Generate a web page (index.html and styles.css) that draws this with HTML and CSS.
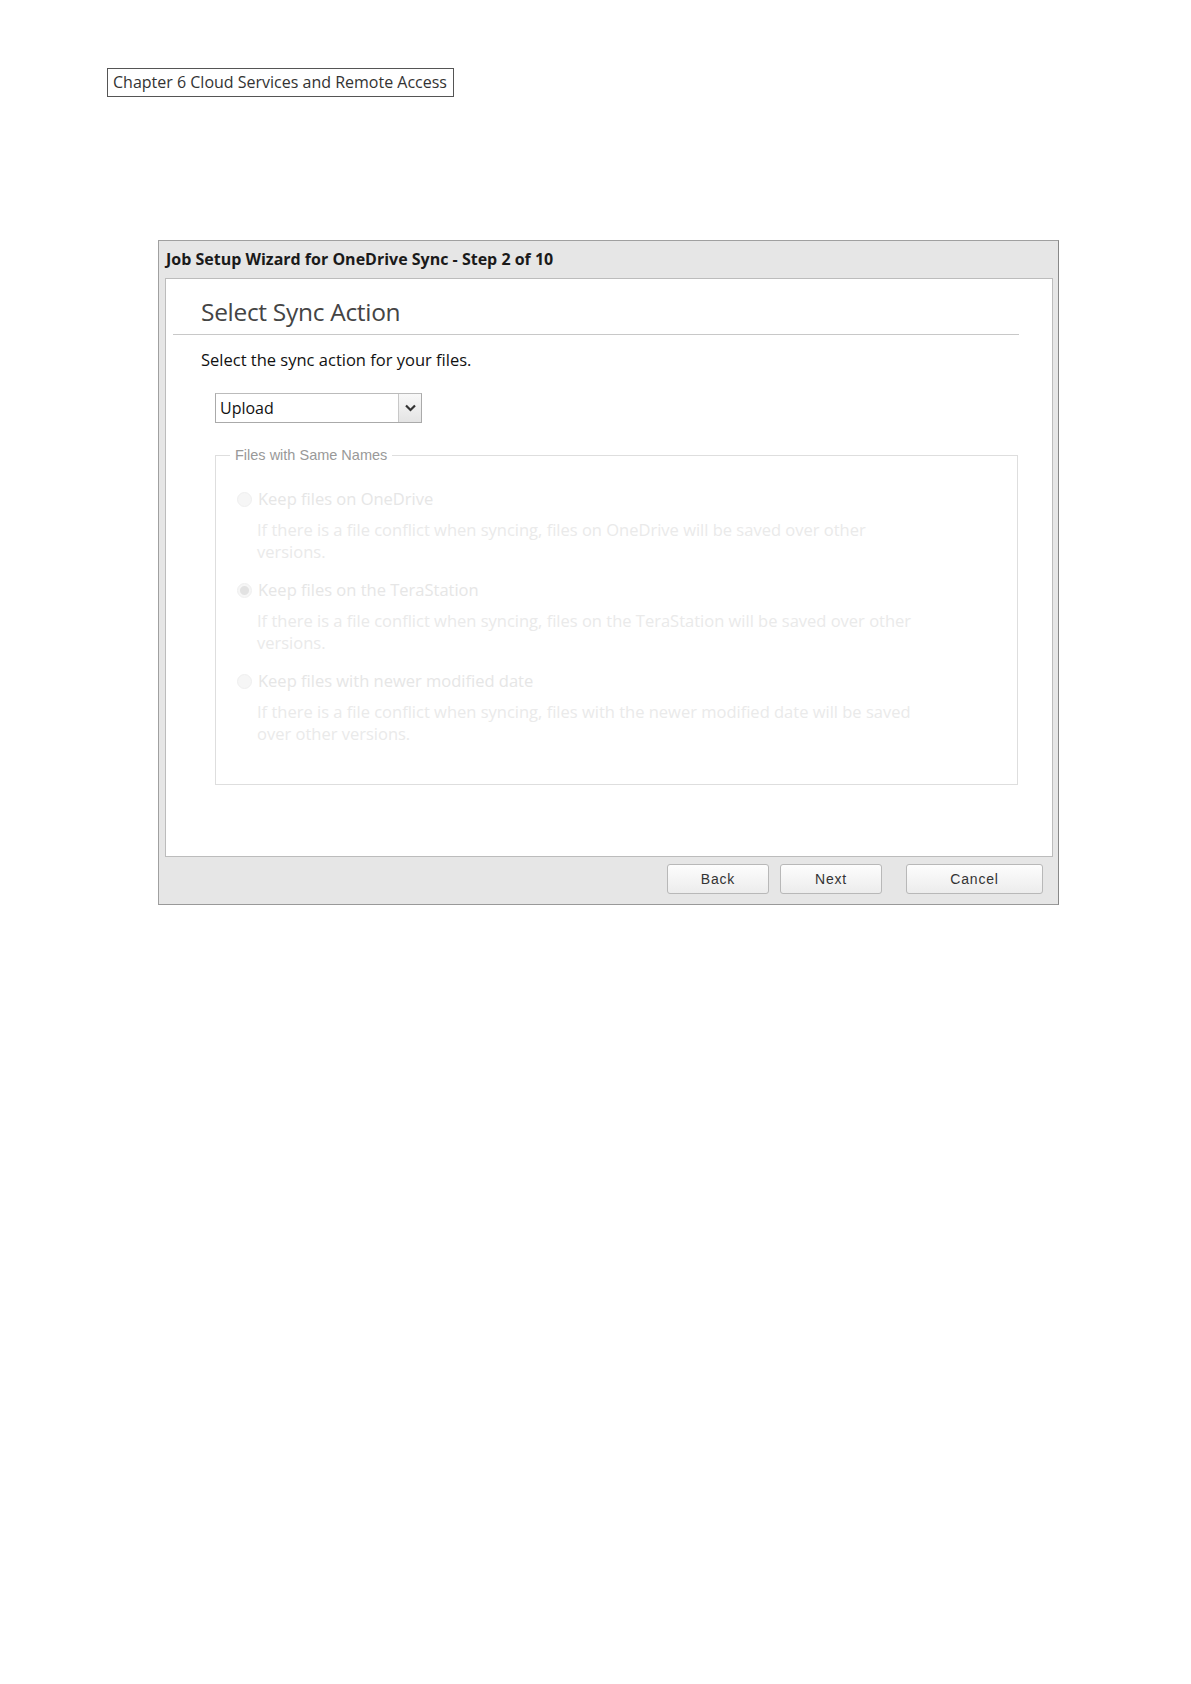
FILE: index.html
```html
<!DOCTYPE html>
<html>
	<head>
		<meta charset="UTF-8">
		<title>Job Setup Wizard for OneDrive Sync</title>
		<link rel="stylesheet" href="styles.css">
	</head>
	<body>
		<div class="page">
			<div class="chapter">Chapter 6 Cloud Services and Remote Access</div>

			<div class="wizard">
				<div class="wizard-title">Job Setup Wizard for OneDrive Sync - Step 2 of 10</div>
				<div class="wizard-body">
					<h2>Select Sync Action</h2>
					<p class="intro">Select the sync action for your files.</p>
					<div class="select">
						<span class="select-value">Upload</span>
						<span class="select-btn">
							<svg width="11" height="8" viewBox="0 0 11 8"><path d="M1 1.5 L5.5 6 L10 1.5" fill="none" stroke="#333" stroke-width="2.2"/></svg>
						</span>
					</div>
					<fieldset class="same-names">
						<legend>Files with Same Names</legend>
						<div class="option">
							<label><span class="radio"></span>Keep files on OneDrive</label>
							<p>If there is a file conflict when syncing, files on OneDrive will be saved over other versions.</p>
						</div>
						<div class="option">
							<label><span class="radio checked"></span>Keep files on the TeraStation</label>
							<p>If there is a file conflict when syncing, files on the TeraStation will be saved over other versions.</p>
						</div>
						<div class="option">
							<label><span class="radio"></span>Keep files with newer modified date</label>
							<p>If there is a file conflict when syncing, files with the newer modified date will be saved over other versions.</p>
						</div>
					</fieldset>
				</div>
				<div class="wizard-footer">
					<button class="btn">Back</button>
					<button class="btn">Next</button>
					<button class="btn btn-wide">Cancel</button>
				</div>
			</div>
		</div>
	</body>
</html>
```

FILE: styles.css
```css
*{
	margin: 0;
	padding: 0;
	box-sizing: border-box;
}
body{
	background: #fff;
	font-family: "Open Sans", "Liberation Sans", sans-serif;
	color: #000;
}
.page{
	padding: 68px 0 0 107px;
}
.chapter{
	display: inline-block;
	height: 29px;
	padding: 0 6px 0 5px;
	border: 1px solid #555;
	font-family: "Open Sans", sans-serif;
	font-size: 16px;
	line-height: 27px;
	color: #333;
}
.wizard{
	width: 901px;
	height: 665px;
	margin: 143px 0 0 51px;
	background: #e6e6e6;
	border: 1px solid #a0a0a0;
	border-right-color: #888;
	border-bottom-color: #999;
	display: flex;
	flex-direction: column;
}
.wizard-title{
	height: 37px;
	padding: 7px 0 0 7px;
	font-size: 16px;
	font-weight: bold;
	color: #1a1a1a;
}
.wizard-body{
	flex: 1;
	margin: 0 5px 0 6px;
	background: #fff;
	border: 1px solid #bcbcbc;
	padding: 0 33px 0 7px;
}
.wizard-body h2{
	margin-top: 18px;
	padding: 0 0 7px 28px;
	border-bottom: 1px solid #c8c8c8;
	font-size: 24.5px;
	font-weight: normal;
	line-height: 30px;
	color: #444;
	letter-spacing: -0.3px;
}
.intro{
	margin-top: 14px;
	padding-left: 28px;
	font-size: 16.5px;
	line-height: 22px;
	color: #111;
}
.select{
	display: flex;
	width: 207px;
	height: 30px;
	margin: 22px 0 0 42px;
	border: 1px solid #aaa;
	border-top-color: #bbb;
}
.select-value{
	flex: 1;
	padding: 3px 0 0 4px;
	font-size: 16px;
	color: #111;
}
.select-btn{
	width: 23px;
	display: flex;
	align-items: center;
	justify-content: center;
	border-left: 1px solid #c8c8c8;
	background: linear-gradient(#f8f8f8, #e4e4e4);
}
.same-names{
	width: 803px;
	height: 338px;
	margin: 24px 0 0 42px;
	border: 1px solid #dedede;
	padding: 25px 0 0 0;
}
.same-names legend{
	margin-left: 14px;
	padding: 0 5px;
	font-family: "Liberation Sans", sans-serif;
	font-size: 14.5px;
	color: #999;
}
.option{
	margin-bottom: 17px;
	padding-left: 21px;
}
.option label{
	display: flex;
	align-items: center;
	font-size: 16.5px;
	line-height: 22px;
	color: #e6e6e6;
}
.option p{
	width: 688px;
	margin-top: 9px;
	padding-left: 20px;
	font-size: 16.5px;
	line-height: 21.5px;
	color: #eaeaea;
}
.radio{
	width: 15px;
	height: 15px;
	margin-right: 6px;
	border-radius: 50%;
	border: 1px solid #efefef;
	background: #f6f6f6;
}
.radio.checked{
	background: radial-gradient(circle, #e2e2e2 0 4px, #f6f6f6 5px);
}
.wizard-footer{
	height: 47px;
	display: flex;
	justify-content: flex-end;
	align-items: flex-start;
	gap: 11px;
	padding: 7px 15px 0 0;
}
.btn{
	width: 102px;
	height: 30px;
	border: 1px solid #b8b8b8;
	border-radius: 3px;
	background: linear-gradient(#fdfdfd, #ececec);
	font-family: "Liberation Sans", sans-serif;
	font-size: 14px;
	letter-spacing: 0.8px;
	color: #333;
}
.btn-wide{
	width: 137px;
	margin-left: 13px;
}
```
